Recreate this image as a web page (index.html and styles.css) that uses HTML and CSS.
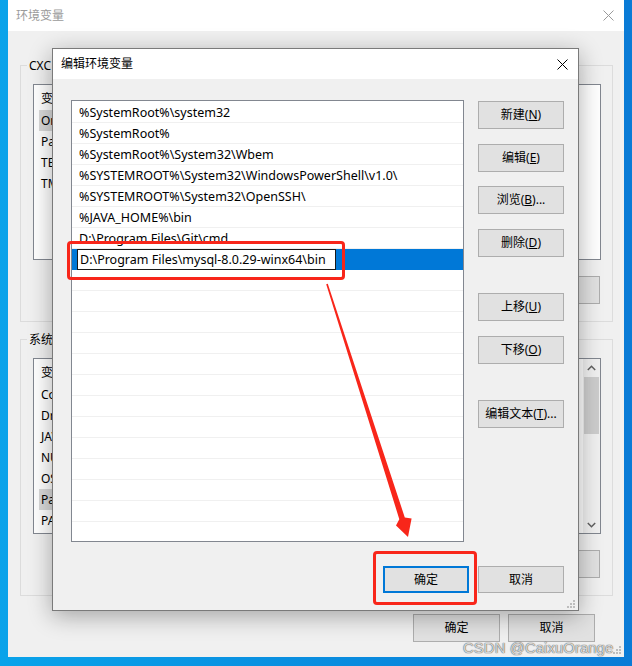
FILE: index.html
```html
<!DOCTYPE html>
<html lang="zh-CN">
<head>
<meta charset="utf-8">
<title>编辑环境变量</title>
<link rel="stylesheet" href="styles.css">
</head>
<body>
<div class="desktop">
  <div class="outer">
    <div class="outer-title">
      <span class="outer-title-text">环境变量</span>
      <svg class="close-x" width="11" height="11" viewBox="0 0 11 11"><path d="M0.5 0.5 L10.5 10.5 M10.5 0.5 L0.5 10.5" stroke="#9a9a9a" stroke-width="1" fill="none"/></svg>
    </div>
    <div class="outer-body">
      <div class="group">
        <span class="group-label">CXC</span>
        <div class="vlist">
          <div class="vlist-main">
            <div class="vhead"><span class="c1">变量</span></div>
            <div class="vrow sel"><span class="c1">OneDrive</span></div>
            <div class="vrow"><span class="c1">Path</span></div>
            <div class="vrow"><span class="c1">TEMP</span></div>
            <div class="vrow"><span class="c1">TMP</span></div>
          </div>
        </div>
        <div class="group-btns">
          <div class="btn gbtn"></div>
          <div class="btn gbtn"></div>
          <div class="btn gbtn"></div>
        </div>
      </div>
      <div class="group">
        <span class="group-label">系统</span>
        <div class="vlist">
          <div class="vlist-main">
            <div class="vhead"><span class="c1">变量</span></div>
            <div class="vrow"><span class="c1">ComSpec</span></div>
            <div class="vrow"><span class="c1">DriverData</span></div>
            <div class="vrow"><span class="c1">JAVA_HOME</span></div>
            <div class="vrow"><span class="c1">NUMBER_OF_PROCESSORS</span></div>
            <div class="vrow"><span class="c1">OS</span></div>
            <div class="vrow sel"><span class="c1">Path</span></div>
            <div class="vrow"><span class="c1">PATHEXT</span></div>
          </div>
          <div class="scrollbar">
            <div class="sb-arrow"><svg width="9" height="6" viewBox="0 0 9 6"><path d="M0.8 5 L4.5 1.3 L8.2 5" stroke="#606060" stroke-width="1.5" fill="none"/></svg></div>
            <div class="sb-track"><div class="sb-thumb"></div></div>
            <div class="sb-arrow"><svg width="9" height="6" viewBox="0 0 9 6"><path d="M0.8 1 L4.5 4.7 L8.2 1" stroke="#606060" stroke-width="1.5" fill="none"/></svg></div>
          </div>
        </div>
        <div class="group-btns">
          <div class="btn gbtn"></div>
          <div class="btn gbtn"></div>
          <div class="btn gbtn"></div>
        </div>
      </div>
      <div class="outer-footer">
        <div class="btn fbtn">确定</div>
        <div class="btn fbtn">取消</div>
      </div>
    </div>
    <svg class="grip outer-grip" width="10" height="10" viewBox="0 0 10 10"><g fill="#bdbdbd"><rect x="7" y="1" width="2" height="2"/><rect x="4" y="4" width="2" height="2"/><rect x="7" y="4" width="2" height="2"/><rect x="1" y="7" width="2" height="2"/><rect x="4" y="7" width="2" height="2"/><rect x="7" y="7" width="2" height="2"/></g></svg>
  </div>

  <div class="dialog">
    <div class="dialog-title">
      <span>编辑环境变量</span>
      <svg class="close-x" width="11" height="11" viewBox="0 0 11 11"><path d="M0.5 0.5 L10.5 10.5 M10.5 0.5 L0.5 10.5" stroke="#000" stroke-width="1" fill="none"/></svg>
    </div>
    <div class="dialog-body">
      <div class="plist">
        <div class="prow">%SystemRoot%\system32</div>
        <div class="prow">%SystemRoot%</div>
        <div class="prow">%SystemRoot%\System32\Wbem</div>
        <div class="prow">%SYSTEMROOT%\System32\WindowsPowerShell\v1.0\</div>
        <div class="prow">%SYSTEMROOT%\System32\OpenSSH\</div>
        <div class="prow">%JAVA_HOME%\bin</div>
        <div class="prow">D:\Program Files\Git\cmd</div>
        <div class="prow editing"><div class="edit">D:\Program Files\mysql-8.0.29-winx64\bin</div></div>
        <div class="prow"></div><div class="prow"></div><div class="prow"></div><div class="prow"></div>
        <div class="prow"></div><div class="prow"></div><div class="prow"></div><div class="prow"></div>
        <div class="prow"></div><div class="prow"></div><div class="prow"></div><div class="prow"></div>
        <div class="prow"></div>
      </div>
      <div class="side-btns">
        <div class="btn sbtn">新建(<u>N</u>)</div>
        <div class="btn sbtn">编辑(<u>E</u>)</div>
        <div class="btn sbtn">浏览(<u>B</u>)...</div>
        <div class="btn sbtn">删除(<u>D</u>)</div>
        <div class="btn sbtn sep">上移(<u>U</u>)</div>
        <div class="btn sbtn">下移(<u>O</u>)</div>
        <div class="btn sbtn sep">编辑文本(<u>T</u>)...</div>
      </div>
      <div class="dialog-footer">
        <div class="btn dbtn default">确定</div>
        <div class="btn dbtn">取消</div>
      </div>
    </div>
    <svg class="grip dialog-grip" width="10" height="10" viewBox="0 0 10 10"><g fill="#bdbdbd"><rect x="7" y="1" width="2" height="2"/><rect x="4" y="4" width="2" height="2"/><rect x="7" y="4" width="2" height="2"/><rect x="1" y="7" width="2" height="2"/><rect x="4" y="7" width="2" height="2"/><rect x="7" y="7" width="2" height="2"/></g></svg>
  </div>

  <div class="mark mark-edit"></div>
  <div class="mark mark-ok"></div>
  <svg class="arrow" width="632" height="666" viewBox="0 0 632 666">
    <polygon points="326.2,284.2 327.8,283.8 404.8,517.5 411.6,518.4 408,537 396,525.6 399.3,519.2" fill="#f8261a"/>
  </svg>
  <div class="watermark">CSDN @CaixuOrange</div>
</div>
</body>
</html>
```

FILE: styles.css
```css
* { box-sizing: border-box; }
html, body { margin: 0; padding: 0; }
body {
  width: 632px;
  height: 666px;
  overflow: hidden;
  background: linear-gradient(90deg, #0aa3ea 0%, #0a8fe0 45%, #0a7bd6 100%);
  font-family: "Noto Sans", "Noto Sans CJK SC", sans-serif;
  font-size: 12px;
  color: #000;
}
.desktop {
  position: relative;
  width: 632px;
  height: 666px;
  padding-left: 8px;
}

/* ---------- outer window ---------- */
.outer {
  position: relative;
  width: 616px;
  height: 657px;
  background: #f0f0f0;
  display: flex;
  flex-direction: column;
}
.outer-title {
  height: 31px;
  flex: none;
  background: #fff;
  display: flex;
  align-items: center;
  justify-content: space-between;
  padding: 0 10px 0 8px;
  color: #9a9a9a;
  line-height: 16px;
}
.close-x { display: block; }
.outer-body {
  padding: 0 11px 0 12px;
  display: flex;
  flex-direction: column;
}
.group {
  border: 1px solid #dcdcdc;
  margin-top: 34px;
  padding: 0 11px 17px 12px;
  display: flex;
  flex-direction: column;
}
.group + .group { margin-top: 17px; }
.group-label {
  display: block;
  align-self: flex-start;
  height: 16px;
  line-height: 16px;
  margin: -8px 0 0 -6px;
  padding: 0 2px;
  background: #f0f0f0;
  white-space: nowrap;
}
.vlist {
  margin-top: 10px;
  height: 176px;
  border: 1px solid #828790;
  background: #fff;
  display: flex;
  overflow: hidden;
}
.vlist-main {
  flex: 1;
  padding-top: 3px;
  padding-left: 5px;
}
.vhead {
  height: 22px;
  line-height: 21px;
  display: flex;
}
.vrow {
  height: 21px;
  line-height: 21px;
  display: flex;
}
.c1 { width: 160px; padding-left: 2px; white-space: nowrap; }
.vrow.sel .c1 { background: #d9d9d9; }
.scrollbar {
  width: 17px;
  flex: none;
  background: #f0f0f0;
  display: flex;
  flex-direction: column;
}
.sb-arrow {
  height: 17px;
  display: flex;
  align-items: center;
  justify-content: center;
}
.sb-track { flex: 1; padding: 1px 1px 0; }
.sb-thumb { height: 57px; background: #cdcdcd; }
.group-btns {
  margin-top: 16px;
  display: flex;
  justify-content: flex-end;
  gap: 8px;
  padding-right: 1px;
}
.btn {
  background: #e1e1e1;
  border: 1px solid #adadad;
  display: flex;
  align-items: center;
  justify-content: center;
  white-space: nowrap;
  font-size: 12px;
  line-height: 16px;
}
.btn u { text-underline-offset: 1px; }
.gbtn { width: 86px; height: 28px; }
.outer-footer {
  margin-top: 18px;
  display: flex;
  justify-content: flex-end;
  gap: 8px;
  padding-right: 18px;
}
.fbtn { width: 87px; height: 28px; }
.grip { position: absolute; display: block; }
.outer-grip { right: 2px; bottom: 2px; }

/* ---------- edit dialog ---------- */
.dialog {
  position: absolute;
  left: 52px;
  top: 48px;
  width: 527px;
  height: 563px;
  border: 1px solid #7a7a7a;
  background: #f0f0f0;
  box-shadow: 0 5px 22px rgba(0, 0, 0, 0.32);
  display: flex;
  flex-direction: column;
}
.dialog-title {
  height: 30px;
  flex: none;
  background: #fff;
  display: flex;
  align-items: center;
  justify-content: space-between;
  padding: 0 10px 0 8px;
  line-height: 16px;
}
.dialog-body {
  padding: 21px 14px 17px 18px;
  display: grid;
  grid-template-columns: 393px 86px;
  grid-template-rows: 442px 27px;
  column-gap: 14px;
  row-gap: 24px;
}
.plist {
  border: 1px solid #828790;
  background: #fff;
  padding-top: 1px;
  overflow: hidden;
  font-size: 12.5px;
}
.prow {
  height: 21px;
  padding-top: 2px;
  line-height: 18px;
  border-bottom: 1px solid #f0f0f0;
  padding-left: 7px;
  white-space: nowrap;
}
.prow.editing {
  padding-top: 0;
  background: #0078d7;
  border-bottom-color: #0078d7;
  padding-left: 5px;
}
.edit {
  width: 259px;
  height: 21px;
  border: 1px solid #1a1a1a;
  background: #fff;
  padding-left: 2px;
  line-height: 20px;
}
.side-btns {
  display: flex;
  flex-direction: column;
  padding-top: 1px;
  gap: 14.67px;
}
.sbtn { height: 28px; flex: none; }
.sbtn.sep { margin-top: 21.33px; }
.dialog-footer {
  grid-column: 1 / 3;
  display: flex;
  justify-content: flex-end;
  gap: 9px;
}
.dbtn { width: 86px; height: 27px; }
.dbtn.default { border: 2px solid #0078d7; }
.dialog-grip { right: 2px; bottom: 1px; }

/* ---------- annotations ---------- */
.mark {
  position: absolute;
  border: 3px solid #f8261a;
  border-radius: 4px;
}
.mark-edit { left: 67px; top: 241px; width: 278px; height: 39px; }
.mark-ok { left: 373px; top: 551px; width: 104px; height: 54px; }
.arrow { position: absolute; left: 0; top: 0; pointer-events: none; }
.watermark {
  position: absolute;
  left: 463px;
  top: 639px;
  font-family: "Liberation Sans", Arial, sans-serif;
  font-size: 15px;
  line-height: 18px;
  color: rgba(255, 255, 255, 0.8);
  text-shadow: 0 0 1px rgba(0, 0, 0, 0.7), 0 0 1px rgba(0, 0, 0, 0.5);
  white-space: nowrap;
}
```
